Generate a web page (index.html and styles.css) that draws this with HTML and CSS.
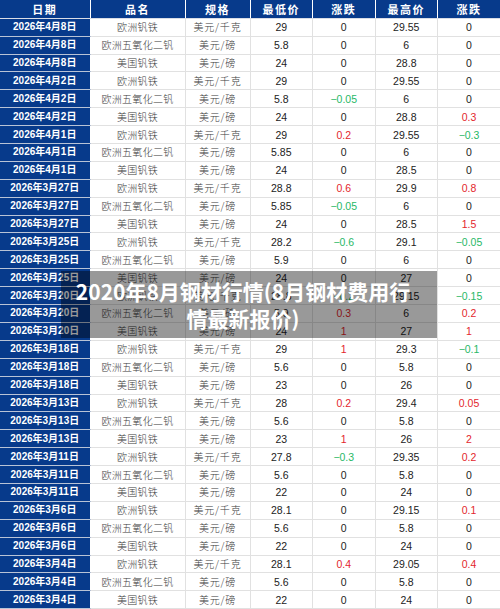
FILE: index.html
```html
<!DOCTYPE html>
<html lang="zh-CN">
<head>
<meta charset="utf-8">
<title>2020年8月钢材行情</title>
<link rel="stylesheet" href="styles.css">
</head>
<body>
<div class="page">
<table class="prices">
<colgroup>
<col class="c-date"><col class="c-name"><col class="c-unit"><col class="c-num"><col class="c-num"><col class="c-num"><col class="c-num">
</colgroup>
<thead>
<tr><th>日期</th><th>品名</th><th>规格</th><th>最低价</th><th>涨跌</th><th>最高价</th><th>涨跌</th></tr>
</thead>
<tbody>
<tr><td class="d">2026年4月8日</td><td class="n">欧洲钒铁</td><td class="u">美元/千克</td><td class="v">29</td><td class="v">0</td><td class="v">29.55</td><td class="v">0</td></tr>
<tr><td class="d">2026年4月8日</td><td class="n">欧洲五氧化二钒</td><td class="u">美元/磅</td><td class="v">5.8</td><td class="v">0</td><td class="v">6</td><td class="v">0</td></tr>
<tr><td class="d">2026年4月8日</td><td class="n">美国钒铁</td><td class="u">美元/磅</td><td class="v">24</td><td class="v">0</td><td class="v">28.8</td><td class="v">0</td></tr>
<tr><td class="d">2026年4月2日</td><td class="n">欧洲钒铁</td><td class="u">美元/千克</td><td class="v">29</td><td class="v">0</td><td class="v">29.55</td><td class="v">0</td></tr>
<tr><td class="d">2026年4月2日</td><td class="n">欧洲五氧化二钒</td><td class="u">美元/磅</td><td class="v">5.8</td><td class="v dn">−0.05</td><td class="v">6</td><td class="v">0</td></tr>
<tr><td class="d">2026年4月2日</td><td class="n">美国钒铁</td><td class="u">美元/磅</td><td class="v">24</td><td class="v">0</td><td class="v">28.8</td><td class="v up">0.3</td></tr>
<tr><td class="d">2026年4月1日</td><td class="n">欧洲钒铁</td><td class="u">美元/千克</td><td class="v">29</td><td class="v up">0.2</td><td class="v">29.55</td><td class="v dn">−0.3</td></tr>
<tr><td class="d">2026年4月1日</td><td class="n">欧洲五氧化二钒</td><td class="u">美元/磅</td><td class="v">5.85</td><td class="v">0</td><td class="v">6</td><td class="v">0</td></tr>
<tr><td class="d">2026年4月1日</td><td class="n">美国钒铁</td><td class="u">美元/磅</td><td class="v">24</td><td class="v">0</td><td class="v">28.5</td><td class="v">0</td></tr>
<tr><td class="d">2026年3月27日</td><td class="n">欧洲钒铁</td><td class="u">美元/千克</td><td class="v">28.8</td><td class="v up">0.6</td><td class="v">29.9</td><td class="v up">0.8</td></tr>
<tr><td class="d">2026年3月27日</td><td class="n">欧洲五氧化二钒</td><td class="u">美元/磅</td><td class="v">5.85</td><td class="v dn">−0.05</td><td class="v">6</td><td class="v">0</td></tr>
<tr><td class="d">2026年3月27日</td><td class="n">美国钒铁</td><td class="u">美元/磅</td><td class="v">24</td><td class="v">0</td><td class="v">28.5</td><td class="v up">1.5</td></tr>
<tr><td class="d">2026年3月25日</td><td class="n">欧洲钒铁</td><td class="u">美元/千克</td><td class="v">28.2</td><td class="v dn">−0.6</td><td class="v">29.1</td><td class="v dn">−0.05</td></tr>
<tr><td class="d">2026年3月25日</td><td class="n">欧洲五氧化二钒</td><td class="u">美元/磅</td><td class="v">5.9</td><td class="v">0</td><td class="v">6</td><td class="v">0</td></tr>
<tr><td class="d">2026年3月25日</td><td class="n">美国钒铁</td><td class="u">美元/磅</td><td class="v">24</td><td class="v">0</td><td class="v">27</td><td class="v">0</td></tr>
<tr><td class="d">2026年3月20日</td><td class="n">欧洲钒铁</td><td class="u">美元/千克</td><td class="v">28.8</td><td class="v dn">−0.2</td><td class="v">29.15</td><td class="v dn">−0.15</td></tr>
<tr><td class="d">2026年3月20日</td><td class="n">欧洲五氧化二钒</td><td class="u">美元/磅</td><td class="v">5.9</td><td class="v up">0.3</td><td class="v">6</td><td class="v up">0.2</td></tr>
<tr><td class="d">2026年3月20日</td><td class="n">美国钒铁</td><td class="u">美元/磅</td><td class="v">24</td><td class="v up">1</td><td class="v">27</td><td class="v up">1</td></tr>
<tr><td class="d">2026年3月18日</td><td class="n">欧洲钒铁</td><td class="u">美元/千克</td><td class="v">29</td><td class="v up">1</td><td class="v">29.3</td><td class="v dn">−0.1</td></tr>
<tr><td class="d">2026年3月18日</td><td class="n">欧洲五氧化二钒</td><td class="u">美元/磅</td><td class="v">5.6</td><td class="v">0</td><td class="v">5.8</td><td class="v">0</td></tr>
<tr><td class="d">2026年3月18日</td><td class="n">美国钒铁</td><td class="u">美元/磅</td><td class="v">23</td><td class="v">0</td><td class="v">26</td><td class="v">0</td></tr>
<tr><td class="d">2026年3月13日</td><td class="n">欧洲钒铁</td><td class="u">美元/千克</td><td class="v">28</td><td class="v up">0.2</td><td class="v">29.4</td><td class="v up">0.05</td></tr>
<tr><td class="d">2026年3月13日</td><td class="n">欧洲五氧化二钒</td><td class="u">美元/磅</td><td class="v">5.6</td><td class="v">0</td><td class="v">5.8</td><td class="v">0</td></tr>
<tr><td class="d">2026年3月13日</td><td class="n">美国钒铁</td><td class="u">美元/磅</td><td class="v">23</td><td class="v up">1</td><td class="v">26</td><td class="v up">2</td></tr>
<tr><td class="d">2026年3月11日</td><td class="n">欧洲钒铁</td><td class="u">美元/千克</td><td class="v">27.8</td><td class="v dn">−0.3</td><td class="v">29.35</td><td class="v up">0.2</td></tr>
<tr><td class="d">2026年3月11日</td><td class="n">欧洲五氧化二钒</td><td class="u">美元/磅</td><td class="v">5.6</td><td class="v">0</td><td class="v">5.8</td><td class="v">0</td></tr>
<tr><td class="d">2026年3月11日</td><td class="n">美国钒铁</td><td class="u">美元/磅</td><td class="v">22</td><td class="v">0</td><td class="v">24</td><td class="v">0</td></tr>
<tr><td class="d">2026年3月6日</td><td class="n">欧洲钒铁</td><td class="u">美元/千克</td><td class="v">28.1</td><td class="v">0</td><td class="v">29.15</td><td class="v up">0.1</td></tr>
<tr><td class="d">2026年3月6日</td><td class="n">欧洲五氧化二钒</td><td class="u">美元/磅</td><td class="v">5.6</td><td class="v">0</td><td class="v">5.8</td><td class="v">0</td></tr>
<tr><td class="d">2026年3月6日</td><td class="n">美国钒铁</td><td class="u">美元/磅</td><td class="v">22</td><td class="v">0</td><td class="v">24</td><td class="v">0</td></tr>
<tr><td class="d">2026年3月4日</td><td class="n">欧洲钒铁</td><td class="u">美元/千克</td><td class="v">28.1</td><td class="v up">0.4</td><td class="v">29.05</td><td class="v up">0.4</td></tr>
<tr><td class="d">2026年3月4日</td><td class="n">欧洲五氧化二钒</td><td class="u">美元/磅</td><td class="v">5.6</td><td class="v">0</td><td class="v">5.8</td><td class="v">0</td></tr>
<tr><td class="d">2026年3月4日</td><td class="n">美国钒铁</td><td class="u">美元/磅</td><td class="v">22</td><td class="v">0</td><td class="v">24</td><td class="v">0</td></tr>
</tbody>
</table>
<div class="caption">2020年8月钢材行情(8月钢材费用行情最新报价)</div>
</div>
</body>
</html>
```

FILE: styles.css
```css
html, body {
  margin: 0;
  padding: 0;
  background: #ffffff;
}
body {
  width: 500px;
  height: 609px;
  overflow: hidden;
}
.page {
  position: relative;
  width: 500px;
  height: 609px;
  overflow: hidden;
}
.prices {
  width: 500px;
  table-layout: fixed;
  border-collapse: collapse;
  border-spacing: 0;
}
.c-date { width: 90px; }
.c-name { width: 95px; }
.c-unit { width: 65px; }
.c-num { width: 62.5px; }

.prices th {
  height: 17.8px;
  padding: 0;
  background: #073a8b;
  color: #ffffff;
  font-family: "Noto Sans CJK SC", sans-serif;
  font-weight: 700;
  font-size: 11px;
  letter-spacing: 1.5px;
  line-height: 14px;
  text-align: center;
  border-left: 1px solid #ffffff;
  border-bottom: 1px solid #d9dde6;
}
.prices th:first-child { border-left: none; }

.prices td {
  height: 16.9px;
  padding: 0;
  text-align: center;
  border-left: 1px solid #e1e1e1;
  border-bottom: 1px solid #e1e1e1;
  line-height: 12px;
  white-space: nowrap;
  overflow: hidden;
}
.prices td.d {
  border-left: none;
  background: #073a8b;
  color: #ffffff;
  font-family: "Liberation Sans", "Noto Sans CJK SC", sans-serif;
  font-weight: 700;
  font-size: 10px;
  border-bottom: 1px solid #b9c3d6;
  border-right: 1px solid #ffffff;
}
.prices td.n,
.prices td.u {
  font-family: "Noto Sans CJK SC", sans-serif;
  font-weight: 300;
  font-size: 10px;
  color: #3a3a3a;
}
.prices td.n { letter-spacing: 0.3px; }
.prices td.u { letter-spacing: 0.8px; }
.prices td.v {
  font-family: "Liberation Sans", sans-serif;
  font-size: 10.5px;
  color: #222222;
}
.prices td.up { color: #e3262d; }
.prices td.dn { color: #27b866; }

.caption {
  position: absolute;
  left: 61px;
  top: 271px;
  width: 376px;
  height: 67px;
  box-sizing: border-box;
  padding: 0 22px 0 10px;
  display: flex;
  align-items: center;
  justify-content: center;
  text-align: center;
  background: rgba(0, 0, 0, 0.4);
  color: #ffffff;
  font-family: "Noto Sans CJK SC", sans-serif;
  font-weight: 700;
  font-size: 21px;
  line-height: 27px;
}
```
